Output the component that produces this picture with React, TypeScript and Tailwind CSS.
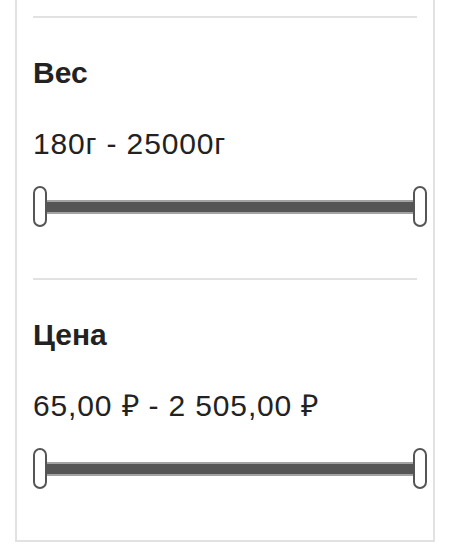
const filters = [
  { title: 'Вес', range: '180г - 25000г' },
  { title: 'Цена', range: '65,00 ₽ - 2 505,00 ₽' },
];

function RangeTrack() {
  return (
    <div className="flex h-[41px] w-[calc(100%+10px)] items-center">
      <div className="h-[41px] w-[14px] shrink-0 rounded-full border-2 border-[#555] bg-white" />
      <div className="h-[14px] flex-1 border-y-2 border-[#a3a3a3] bg-[#555]" />
      <div className="h-[41px] w-[14px] shrink-0 rounded-full border-2 border-[#555] bg-white" />
    </div>
  );
}

export default function App() {
  return (
    <div className="min-h-screen bg-white pl-[15px] pr-[19px] font-['Liberation_Sans',Arial,sans-serif] text-[#222]">
      <div className="border-x-2 border-b-2 border-[#e2e2e2] px-[16px] pt-[16px]">
        {filters.map((f) => (
          <section key={f.title} className="border-t-2 border-[#e2e2e2] pt-[40px] pb-[51px]">
            <h3 className="text-[30px] font-bold leading-[30px]">{f.title}</h3>
            <p className="mt-[41px] text-[30px] leading-[30px] tracking-[0.85px]">{f.range}</p>
            <div className="mt-[27px]">
              <RangeTrack />
            </div>
          </section>
        ))}
      </div>
    </div>
  );
}
